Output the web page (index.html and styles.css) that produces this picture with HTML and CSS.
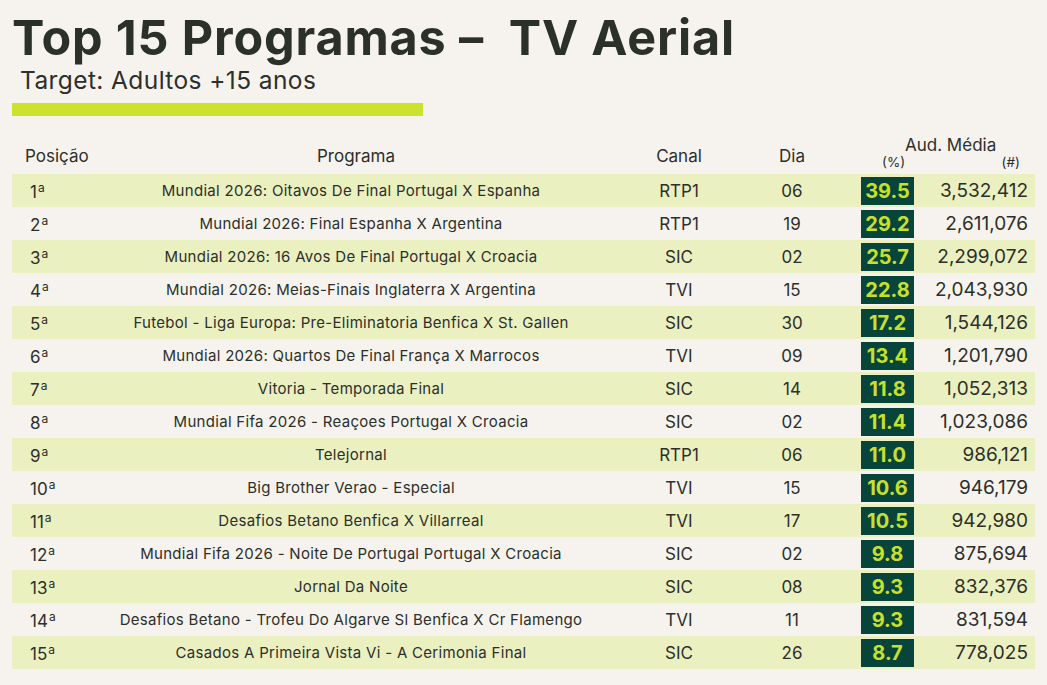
FILE: index.html
```html
<!DOCTYPE html>
<html lang="pt">
<head>
<meta charset="utf-8">
<title>Top 15 Programas – TV Aerial</title>
<link rel="stylesheet" href="styles.css">
</head>
<body>
<div class="page">
  <header class="head">
    <h1 class="title">Top 15 Programas –&nbsp; TV Aerial</h1>
    <p class="subtitle">Target: Adultos +15 anos</p>
    <div class="accent"></div>
  </header>
  <div class="table">
    <div class="thead">
      <div class="th th-pos">Posição</div>
      <div class="th th-prog">Programa</div>
      <div class="th th-canal">Canal</div>
      <div class="th th-dia">Dia</div>
      <div class="th th-aud">
        <div class="aud-title">Aud. Média</div>
        <div class="aud-units"><span>(%)</span><span>(#)</span></div>
      </div>
    </div>
    <div class="row"><div class="pos">1<span class="ord">a</span></div><div class="prog">Mundial 2026: Oitavos De Final Portugal X Espanha</div><div class="canal">RTP1</div><div class="dia">06</div><div class="pct">39.5</div><div class="num">3,532,412</div></div>
    <div class="row"><div class="pos">2<span class="ord">a</span></div><div class="prog">Mundial 2026: Final Espanha X Argentina</div><div class="canal">RTP1</div><div class="dia">19</div><div class="pct">29.2</div><div class="num">2,611,076</div></div>
    <div class="row"><div class="pos">3<span class="ord">a</span></div><div class="prog">Mundial 2026: 16 Avos De Final Portugal X Croacia</div><div class="canal">SIC</div><div class="dia">02</div><div class="pct">25.7</div><div class="num">2,299,072</div></div>
    <div class="row"><div class="pos">4<span class="ord">a</span></div><div class="prog">Mundial 2026: Meias-Finais Inglaterra X Argentina</div><div class="canal">TVI</div><div class="dia">15</div><div class="pct">22.8</div><div class="num">2,043,930</div></div>
    <div class="row"><div class="pos">5<span class="ord">a</span></div><div class="prog">Futebol - Liga Europa: Pre-Eliminatoria Benfica X St. Gallen</div><div class="canal">SIC</div><div class="dia">30</div><div class="pct">17.2</div><div class="num">1,544,126</div></div>
    <div class="row"><div class="pos">6<span class="ord">a</span></div><div class="prog">Mundial 2026: Quartos De Final França X Marrocos</div><div class="canal">TVI</div><div class="dia">09</div><div class="pct">13.4</div><div class="num">1,201,790</div></div>
    <div class="row"><div class="pos">7<span class="ord">a</span></div><div class="prog">Vitoria - Temporada Final</div><div class="canal">SIC</div><div class="dia">14</div><div class="pct">11.8</div><div class="num">1,052,313</div></div>
    <div class="row"><div class="pos">8<span class="ord">a</span></div><div class="prog">Mundial Fifa 2026 - Reaçoes Portugal X Croacia</div><div class="canal">SIC</div><div class="dia">02</div><div class="pct">11.4</div><div class="num">1,023,086</div></div>
    <div class="row"><div class="pos">9<span class="ord">a</span></div><div class="prog">Telejornal</div><div class="canal">RTP1</div><div class="dia">06</div><div class="pct">11.0</div><div class="num">986,121</div></div>
    <div class="row"><div class="pos">10<span class="ord">a</span></div><div class="prog">Big Brother Verao - Especial</div><div class="canal">TVI</div><div class="dia">15</div><div class="pct">10.6</div><div class="num">946,179</div></div>
    <div class="row"><div class="pos">11<span class="ord">a</span></div><div class="prog">Desafios Betano Benfica X Villarreal</div><div class="canal">TVI</div><div class="dia">17</div><div class="pct">10.5</div><div class="num">942,980</div></div>
    <div class="row"><div class="pos">12<span class="ord">a</span></div><div class="prog">Mundial Fifa 2026 - Noite De Portugal Portugal X Croacia</div><div class="canal">SIC</div><div class="dia">02</div><div class="pct">9.8</div><div class="num">875,694</div></div>
    <div class="row"><div class="pos">13<span class="ord">a</span></div><div class="prog">Jornal Da Noite</div><div class="canal">SIC</div><div class="dia">08</div><div class="pct">9.3</div><div class="num">832,376</div></div>
    <div class="row"><div class="pos">14<span class="ord">a</span></div><div class="prog">Desafios Betano - Trofeu Do Algarve Sl Benfica X Cr Flamengo</div><div class="canal">TVI</div><div class="dia">11</div><div class="pct">9.3</div><div class="num">831,594</div></div>
    <div class="row"><div class="pos">15<span class="ord">a</span></div><div class="prog">Casados A Primeira Vista Vi - A Cerimonia Final</div><div class="canal">SIC</div><div class="dia">26</div><div class="pct">8.7</div><div class="num">778,025</div></div>
  </div>
</div>
</body>
</html>
```
FILE: styles.css
```css
* { box-sizing: border-box; }
html, body { margin: 0; padding: 0; }
body {
  background: #f6f3ee;
  color: #2c2f2b;
  font-family: Inter, "Open Sans", sans-serif;
  width: 1047px;
  height: 685px;
  overflow: hidden;
}
.page { padding: 0 12px; }
.head { padding-top: 12px; }
.title {
  margin: 0;
  font-size: 48.5px;
  line-height: 52px;
  font-weight: 700;
  letter-spacing: 0.85px;
  color: #2c302b;
}
.subtitle {
  margin: 2px 0 0 8px;
  font-size: 24.5px;
  line-height: 28px;
  font-weight: 400;
  letter-spacing: 0.4px;
}
.accent {
  margin-top: 9px;
  width: 411px;
  height: 13px;
  background: #cbe22f;
}
.table { margin-top: 14px; width: 1023px; }
.thead, .row {
  display: grid;
  grid-template-columns: 88px 502px 154px 72px 33px 53px 1fr;
  align-items: center;
}
.thead { height: 44px; }
.th { font-size: 17px; }
.th-pos { padding-left: 13px; padding-top: 8px; }
.th-prog { text-align: center; padding-left: 10px; padding-top: 8px; }
.th-canal { text-align: center; padding-top: 8px; }
.th-dia { text-align: center; padding-top: 8px; }
.th-aud { grid-column: 6 / 8; align-self: start; padding-top: 6px; }
.aud-title { padding-left: 44px; font-size: 17px; line-height: 18px; }
.aud-units {
  display: flex;
  justify-content: space-between;
  padding: 0 15px 0 21px;
  font-size: 13.5px;
  line-height: 16px;
}
.row { height: 33px; font-size: 17px; }
.row:nth-child(even) { background: #ebf0c0; }
.pos { padding-left: 18px; }
.ord { font-size: 12px; vertical-align: 6px; margin-left: 1px; }
.prog { text-align: center; font-size: 15px; letter-spacing: 0.3px; }
.canal, .dia { text-align: center; }
.pct {
  grid-column: 6;
  height: 28px;
  margin-top: 1px;
  background: #07443a;
  color: #c8e02b;
  font-weight: 700;
  font-size: 20px;
  line-height: 28px;
  text-align: center;
}
.num { text-align: right; padding-right: 7px; font-size: 19px; }
```
